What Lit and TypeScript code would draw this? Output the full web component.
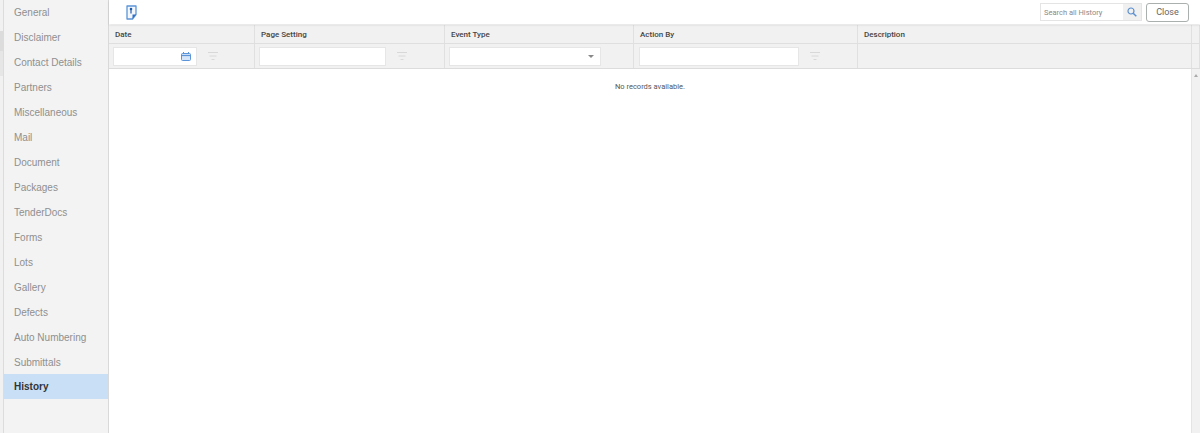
import { LitElement, html, css, svg } from "lit";
import { customElement } from "lit/decorators.js";

const NAV = ["General","Disclaimer","Contact Details","Partners","Miscellaneous","Mail","Document","Packages","TenderDocs","Forms","Lots","Gallery","Defects","Auto Numbering","Submittals","History"];

const filterIcon = html`<svg class="filter" width="12" height="10" viewBox="0 0 12 10" fill="none" stroke="#d8d8d8" stroke-width="1"><path d="M1 1.500h10M2.500 5h7M4.500 8.500h3"/></svg>`;

@customElement("app-root")
export class AppRoot extends LitElement {
  static styles = css`
    :host { display: block; width: 1200px; height: 433px; overflow: hidden; font-family: Roboto, "Liberation Sans", sans-serif; background: #fff; }
    .page { display: flex; height: 433px; }
    .strip { width: 4px; background: #f1f1f1; border-right: 1px solid #dcdcdc; box-sizing: border-box; display: flex; flex-direction: column; }
    .seg-a { height: 31px; flex: none; }
    .seg-b { height: 20px; flex: none; background: #dcdcdc; }
    .seg-c { height: 25px; flex: none; background: #e6e6e6; }
    .nav { width: 105px; background: #f3f3f3; border-right: 1px solid #d9d9d9; box-sizing: border-box; font-family: "Liberation Sans", Arial, sans-serif; }
    .item { height: 25px; line-height: 25px; padding-left: 10px; font-size: 10px; color: #8f8f8f; white-space: nowrap; }
    .item.active { background: #c9dff5; color: #333; font-weight: 700; margin-top: -1px; }
    .main { flex: 1; display: flex; flex-direction: column; min-width: 0; }
    .toolbar { height: 24px; flex: none; display: flex; align-items: center; padding-left: 17px; box-shadow: 0 1px 2px rgba(0,0,0,.12); position: relative; }
    .doc { display: block; }
    .spacer { flex: 1; }
    .search { display: flex; width: 102px; height: 18px; box-sizing: border-box; border: 1px solid #e4e4e4; background: #fff; }
    .search-text { flex: 1; font-size: 7.5px; line-height: 17px; padding-left: 3px; color: #8a8a8a; white-space: nowrap; overflow: hidden; }
    .search-btn { width: 18px; background: #f0f0f0; display: flex; align-items: center; justify-content: center; }
    .close { width: 43px; height: 19px; box-sizing: border-box; margin: 0 11px 0 4px; border: 1px solid #a9b0ad; border-radius: 3px; font-size: 9px; line-height: 17px; text-align: center; color: #666; }
    .row { display: grid; grid-template-columns: 146px 190px 189px 224px 334px 1fr; flex: none; background: #f1f1f1; }
    .head { height: 19px; margin-top: 1px; border-bottom: 1px solid #dfdfdf; box-sizing: border-box; }
    .filters { height: 25px; border-bottom: 1px solid #dcdcdc; box-sizing: border-box; }
    .cell { border-right: 1px solid #e0e0e0; box-sizing: border-box; display: flex; align-items: center; min-width: 0; }
    .head .cell { font-size: 8px; font-weight: 500; color: #444; padding-left: 6px; white-space: nowrap; }
    .filters .cell { padding-left: 4px; }
    .filters .cell.wide { padding-left: 5px; }
    .input { height: 19px; box-sizing: border-box; background: #fff; border: 1px solid #e6e6e6; display: flex; align-items: center; justify-content: flex-end; flex: none; }
    .w-date { width: 84px; padding-right: 5px; }
    .w-page { width: 127px; }
    .w-event { width: 152px; padding-right: 6px; }
    .w-action { width: 160px; }
    .filter { margin-left: 10px; flex: none; }
    .caret { width: 0; height: 0; border-left: 3.500px solid transparent; border-right: 3.500px solid transparent; border-top: 3.500px solid #888; }
    .body { flex: 1; display: flex; min-height: 0; }
    .empty { flex: 1; text-align: center; font-size: 7.500px; color: #555; padding-top: 13px; line-height: 9px; }
    .scroll { width: 9px; background: #f1f1f1; border-left: 1px solid #e4e4e4; box-sizing: border-box; display: flex; justify-content: center; padding-top: 5px; }
    .up { width: 0; height: 0; border-left: 2.500px solid transparent; border-right: 2.500px solid transparent; border-bottom: 3px solid #aaa; }
  `;

  render() {
    return html`<div class="page">
      <div class="strip"><div class="seg-a"></div><div class="seg-b"></div><div class="seg-c"></div></div>
      <nav class="nav">
        ${NAV.map(n => html`<div class="item ${n === "History" ? "active" : ""}">${n}</div>`)}
      </nav>
      <div class="main">
        <div class="toolbar">
          <svg class="doc" width="11" height="15" viewBox="0 0 11 15" fill="none">
            ${svg`<path d="M1 1h9v8.500L6.500 14H1z" fill="#f4f8fd" stroke="#5b94d8" stroke-width="1.300" stroke-linejoin="round"/>
            <path d="M10 9.500H6.500V14z" fill="#2f6fc4"/>
            <circle cx="5" cy="4" r="1.300" fill="#1f5aa8"/>
            <path d="M5 4.500v4" stroke="#1f5aa8" stroke-width="1.200"/>`}
          </svg>
          <div class="spacer"></div>
          <div class="search">
            <div class="search-text">Search all History</div>
            <div class="search-btn">
              <svg width="10" height="10" viewBox="0 0 10 10" fill="none" stroke="#5b8fd0" stroke-width="1.200"><circle cx="4" cy="4" r="3"/><path d="M6.200 6.200 9.300 9.300" stroke-width="1.500"/></svg>
            </div>
          </div>
          <div class="close">Close</div>
        </div>
        <div class="row head">
          <div class="cell">Date</div>
          <div class="cell">Page Setting</div>
          <div class="cell">Event Type</div>
          <div class="cell">Action By</div>
          <div class="cell">Description</div>
          <div class="cell"></div>
        </div>
        <div class="row filters">
          <div class="cell">
            <div class="input w-date">
              <svg width="10" height="9" viewBox="0 0 10 9" fill="#d6e5f7" stroke="#5b94d8"><rect x=".500" y="1.500" width="9" height="7" rx="1"/><path d="M.500 3.500h9" stroke-width="1.200"/><path d="M2.500 0v1.500M7.500 0v1.500"/></svg>
            </div>
            ${filterIcon}
          </div>
          <div class="cell"><div class="input w-page"></div>${filterIcon}</div>
          <div class="cell"><div class="input w-event"><span class="caret"></span></div></div>
          <div class="cell wide"><div class="input w-action"></div>${filterIcon}</div>
          <div class="cell"></div>
          <div class="cell"></div>
        </div>
        <div class="body">
          <div class="empty">No records available.</div>
          <div class="scroll"><span class="up"></span></div>
        </div>
      </div>
    </div>`;
  }
}
